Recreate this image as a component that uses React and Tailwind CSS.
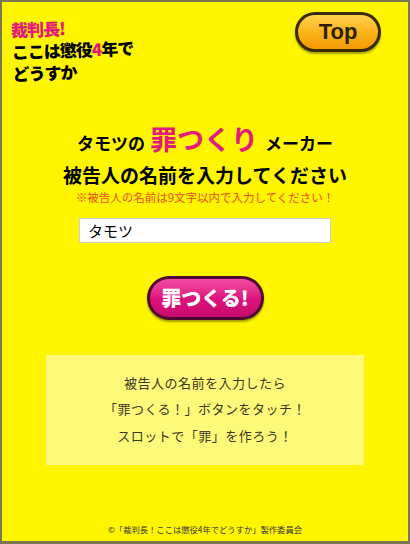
import React from "react";

const jp = { fontFamily: '"Noto Sans CJK JP", "Noto Sans", sans-serif' };

function Logo() {
  return (
    <div
      className="ml-[11px] mt-[17px] origin-bottom-left -rotate-2 font-black leading-[22px] text-[17px] tracking-[-1px] text-black"
      style={jp}
    >
      <div className="text-[#e5197c]">裁判長!</div>
      <div>
        ここは懲役<span className="text-[#e5197c]">4</span>年で
      </div>
      <div>どうすか</div>
    </div>
  );
}

function TopButton() {
  return (
    <button className="mt-[10px] mr-[27px] h-[40px] w-[86px] rounded-full bg-[#3a2a08] p-[3px] shadow-[0_2px_2px_rgba(0,0,0,0.35)]">
      <span className="flex h-full w-full items-center justify-center rounded-full bg-gradient-to-b from-[#ffd24a] via-[#fbb418] to-[#f29a00] text-[22px] font-bold leading-none text-[#2b1c04] [font-family:'Liberation_Sans',Arial,sans-serif]">
        Top
      </span>
    </button>
  );
}

export default function App() {
  return (
    <div
      className="flex h-[544px] w-[410px] flex-col border-2 border-b-[3px] border-[#7b7752] bg-[#fff500]"
      style={jp}
    >
      <div className="flex h-[117px] items-start justify-between">
        <Logo />
        <TopButton />
      </div>

      <div className="flex items-baseline justify-center font-bold text-black">
        <span className="text-[17px]">タモツの</span>
        <span className="ml-[5px] mr-[7px] text-[27px] text-[#e5197c]">罪つくり</span>
        <span className="text-[17px]">メーカー</span>
      </div>

      <div className="mt-[1px] text-center text-[19px] font-bold leading-[28px] text-black">
        被告人の名前を入力してください
      </div>
      <div className="text-center text-[11.5px] leading-[16px] text-[#e8501e]">
        ※被告人の名前は9文字以内で入力してください！
      </div>

      <div className="mt-[13px] flex justify-center">
        <input
          className="h-[25px] w-[252px] border border-[#cfcfcf] bg-white px-[8px] text-[15px] text-black outline-none"
          style={jp}
          defaultValue="タモツ"
        />
      </div>

      <div className="mt-[33px] flex justify-center">
        <button className="h-[44px] w-[117px] rounded-full bg-[#4e0a30] p-[3px] shadow-[0_2px_2px_rgba(0,0,0,0.35)]">
          <span
            className="flex h-full w-full items-center justify-center rounded-full bg-gradient-to-b from-[#f24aa6] via-[#e0147f] to-[#c80a6c] text-[20px] font-black leading-none text-white"
            style={jp}
          >
            罪つくる!
          </span>
        </button>
      </div>

      <div className="mx-auto mt-[35px] flex h-[110px] w-[318px] flex-col items-center justify-center bg-[#fff97a] text-[13px] leading-[26.5px] tracking-[0.5px] text-[#3a3820]">
        <div>被告人の名前を入力したら</div>
        <div>「罪つくる！」ボタンをタッチ！</div>
        <div>スロットで「罪」を作ろう！</div>
      </div>

      <div className="mt-auto mb-[6px] text-center text-[8.3px] leading-[12px] text-[#333]">
        ©「裁判長！ここは懲役4年でどうすか」製作委員会
      </div>
    </div>
  );
}
